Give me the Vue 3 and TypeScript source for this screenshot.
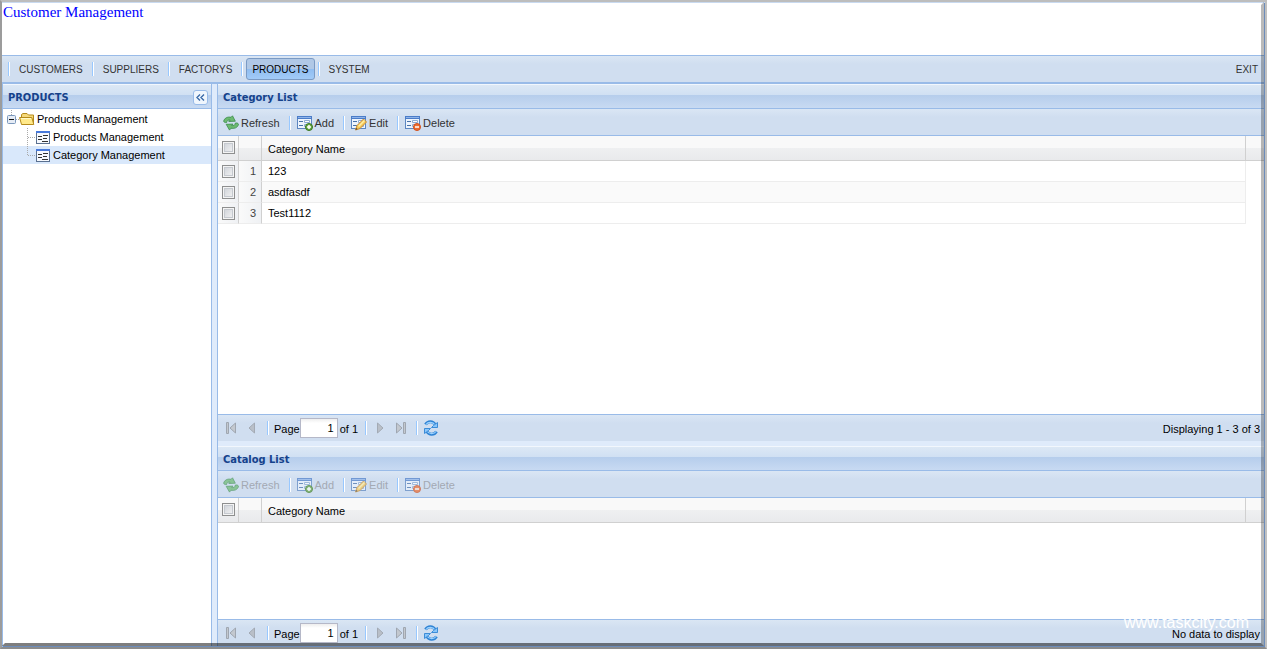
<script setup lang="ts">
import { ref } from 'vue'

interface Action {
  label: string
  icon: 'refresh' | 'add' | 'edit' | 'delete'
}
interface GridPanel {
  id: string
  title: string
  disabled: boolean
  rows: string[]
  status: string
}

const menu: string[] = ['CUSTOMERS', 'SUPPLIERS', 'FACTORYS', 'PRODUCTS', 'SYSTEM']
const activeMenu = ref('PRODUCTS')
const nodes: string[] = ['Products Management', 'Category Management']
const activeNode = ref('Category Management')
const actions: Action[] = [
  { label: 'Refresh', icon: 'refresh' },
  { label: 'Add', icon: 'add' },
  { label: 'Edit', icon: 'edit' },
  { label: 'Delete', icon: 'delete' },
]
const panels: GridPanel[] = [
  { id: 'category', title: 'Category List', disabled: false, rows: ['123', 'asdfasdf', 'Test1112'], status: 'Displaying 1 - 3 of 3' },
  { id: 'catalog', title: 'Catalog List', disabled: true, rows: [], status: 'No data to display' },
]
</script>

<template>
  <div class="window">
    <header class="banner"><a href="#">Customer Management</a></header>

    <nav class="menu">
      <template v-for="item in menu" :key="item">
        <span class="sep"></span>
        <button type="button" :class="{ active: activeMenu === item }" @click="activeMenu = item">{{ item }}</button>
      </template>
      <button type="button" class="exit">EXIT</button>
    </nav>

    <div class="body">
      <aside class="side">
        <h2 class="title">
          PRODUCTS
          <button type="button" class="collapse" aria-label="Collapse">
            <svg width="9" height="7" viewBox="0 0 9 7"><path d="M4 .5 1 3.5l3 3M8 .5 5 3.5l3 3" fill="none" stroke="#3a6aa8" stroke-width="1.4" /></svg>
          </button>
        </h2>
        <ul class="tree">
          <li class="root">
            <svg width="16" height="18" viewBox="0 0 16 18">
              <path d="M8.5 0v5M13 9.5h3" stroke="#aaa" stroke-dasharray="1 1" />
              <rect x="4.5" y="5.5" width="8" height="8" rx="1" fill="#e6ecf5" stroke="#7b98bd" />
              <path d="M6 9.5h5" stroke="#111" />
            </svg>
            <svg width="16" height="16" viewBox="0 0 16 16">
              <path d="M2.5 12V3.500L4 2.500h4l1.500 1.500h5V12z" fill="#f5d97a" stroke="#b58a1b" />
              <path d="M.6 6.500h12.200l2 7H2.500z" fill="#ffe98a" stroke="#b58a1b" />
              <path d="M2 7.500h10" stroke="#fff9c9" />
            </svg>
            <span>Products Management</span>
          </li>
          <li v-for="(node, i) in nodes" :key="node" class="leaf" :class="{ selected: activeNode === node }" @click="activeNode = node">
            <svg width="16" height="18" viewBox="0 0 16 18">
              <path :d="i === 0 ? 'M8.5 0v18M9 9.5h7' : 'M8.5 0v10M9 9.5h7'" stroke="#aaa" stroke-dasharray="1 1" fill="none" />
            </svg>
            <svg width="16" height="16" viewBox="0 0 16 16">
              <rect x="1.5" y="2.5" width="13" height="12" fill="#f6f9fe" stroke="#5a7090" />
              <path d="M1 3h14" stroke="#4779dc" stroke-width="2" />
              <path d="M3 7.500h4M8 6.500h5M3 10.500h4M8 9.500h4M7 12.500h6" stroke="#333" />
            </svg>
            <span>{{ node }}</span>
          </li>
        </ul>
      </aside>

      <main class="main">
        <section v-for="panel in panels" :key="panel.id" class="panel" :class="panel.id">
          <h2 class="title">{{ panel.title }}</h2>

          <div class="actions">
            <template v-for="(action, i) in actions" :key="action.icon">
              <span v-if="i > 0" class="sep"></span>
              <button type="button" :disabled="panel.disabled">
                <svg v-if="action.icon === 'refresh'" width="16" height="16" viewBox="0 0 16 16">
                  <path d="M.6 6.200C1.500 3 4.500 1.500 8 2.300L9.500.8l2.800 5.400-6.500.3 1.400-1.400C5.400 4.700 3.800 5.500 3.600 7.600 2.200 7.800 1 7.300.6 6.200z" fill="#6cba70" stroke="#3a8a4b" stroke-width=".8" />
                  <path d="M15.600 9.300c-.9 3.200-3.900 4.700-7.600 3.900l-1.500 1.900L3.200 9.300l6.800-.2-1.300 1.500c2 .4 3.400-.6 3.700-2.600 1.400-.3 2.700.2 3.200 1.300z" fill="#6cba70" stroke="#3a8a4b" stroke-width=".8" />
                </svg>
                <svg v-else width="16" height="16" viewBox="0 0 16 16">
                  <rect x=".5" y="1.5" width="14" height="12" fill="#edf4fd" stroke="#5c86c1" />
                  <path d="M0 2.500h15" stroke="#4b7cc8" stroke-width="3" />
                  <path d="M1 2.500h13" stroke="#8fb4ea" />
                  <path d="M2 6.500h4M2 10.500h4" stroke="#4771a9" />
                  <path d="M7.500 5.500h5v2h-5zM7.500 9.500h5v2h-5z" fill="#fff" stroke="#8dabd4" />
                  <g v-if="action.icon === 'add'">
                    <circle cx="12" cy="12" r="3.5" fill="#69aa4a" stroke="#38761d" />
                    <path d="M12 10v4M10 12h4" stroke="#fff" stroke-width="1.5" />
                  </g>
                  <g v-else-if="action.icon === 'edit'">
                    <path d="M4.500 15 6 10.500 12.500 4l3 3L9 13.500z" fill="#f8c956" stroke="#c88c35" />
                    <path d="m7.500 11.500 6-6" stroke="#fff0a4" stroke-width="1.500" />
                    <path d="m4.500 15 1-2 1 1z" fill="#333" />
                  </g>
                  <g v-else>
                    <circle cx="12" cy="12" r="3.5" fill="#ee6d32" stroke="#d0511e" />
                    <path d="M10 12h4" stroke="#fff" stroke-width="1.5" />
                  </g>
                </svg>
                {{ action.label }}
              </button>
            </template>
          </div>

          <div class="grid">
            <table>
              <thead>
                <tr>
                  <th class="check"><input type="checkbox" :aria-label="'Select all in ' + panel.title" /></th>
                  <th class="number"></th>
                  <th class="name">Category Name</th>
                  <th class="spare"></th>
                </tr>
              </thead>
              <tbody>
                <tr v-for="(row, i) in panel.rows" :key="row">
                  <td class="check"><input type="checkbox" :aria-label="'Select ' + row" /></td>
                  <td class="number">{{ i + 1 }}</td>
                  <td class="name">{{ row }}</td>
                  <td class="spare"></td>
                </tr>
              </tbody>
            </table>
          </div>

          <footer class="paging">
            <button type="button" disabled aria-label="First page">
              <svg width="16" height="16" viewBox="0 0 16 16"><path d="M3.500 2.500h2v11h-2zM12.500 3v10L7 8z" fill="#c3c8cf" stroke="#9fa6b0" /></svg>
            </button>
            <button type="button" disabled aria-label="Previous page">
              <svg width="16" height="16" viewBox="0 0 16 16"><path d="M10.500 3v10L5 8z" fill="#b9bfc8" stroke="#a3aab4" /></svg>
            </button>
            <span class="sep"></span>
            <label :for="panel.id + '-page'">Page</label>
            <input :id="panel.id + '-page'" type="text" value="1" />
            <span class="total">of 1</span>
            <span class="sep"></span>
            <button type="button" disabled aria-label="Next page">
              <svg width="16" height="16" viewBox="0 0 16 16"><path d="M5.500 3v10L11 8z" fill="#b9bfc8" stroke="#a3aab4" /></svg>
            </button>
            <button type="button" disabled aria-label="Last page">
              <svg width="16" height="16" viewBox="0 0 16 16"><path d="M10.500 2.500h2v11h-2zM3.500 3v10L9 8z" fill="#c3c8cf" stroke="#9fa6b0" /></svg>
            </button>
            <span class="sep"></span>
            <button type="button" aria-label="Reload">
              <svg width="16" height="16" viewBox="0 0 16 16">
                <path d="M2.500 4.500C5 .5 10 1 12 4.500M13.500 11.500c-2.500 4-7.500 3.500-9.500 0" fill="none" stroke="#2f83d4" stroke-width="3" />
                <path d="M3 4.500C5 1.500 10 1.500 12 5M13 11.500c-2 3-7 3-9-.5" fill="none" stroke="#9bd2ff" stroke-width="1.200" />
                <path d="M14.500 2.500v5H8.500l2-2zM1.500 13.500v-5h6l-2 2z" fill="#8ac6fa" stroke="#2f83d4" stroke-width=".9" />
              </svg>
            </button>
            <span class="status">{{ panel.status }}</span>
          </footer>
        </section>
      </main>
    </div>
    <div class="shade"></div>
    <div class="watermark">www.taskcity.com</div>
  </div>
</template>

<style>
body {
  margin: 0;
}
</style>

<style scoped>
* {
  box-sizing: border-box;
}
.window {
  position: relative;
  display: flex;
  flex-direction: column;
  height: 100vh;
  border: 2px solid #9c9c9c;
  border-top-color: #bdbdbd;
  border-right-color: #c0c0c0;
  border-bottom-color: #8c8c8c;
  background: #dfebfb;
  font: 11px/14px "Liberation Sans", Arial, sans-serif;
  color: #000;
}
button {
  display: flex;
  align-items: center;
  margin: 0;
  padding: 0;
  border: 0;
  background: none;
  font: inherit;
  color: #333;
}
svg {
  display: block;
  flex: none;
}
.banner {
  height: 53px;
  padding-left: 1px;
  border-top: 1px solid #c9daf0;
  background: #fff;
  font: 15px/18px "Liberation Serif", "Times New Roman", serif;
}
.banner a {
  color: #00f;
  text-decoration: none;
}
.sep {
  flex: none;
  width: 2px;
  height: 14px;
  border-left: 1px solid #98c8ff;
  border-right: 1px solid #fff;
}
.menu {
  display: flex;
  align-items: center;
  height: 29px;
  padding: 0 6px;
  border-top: 1px solid #99bbe8;
  border-bottom: 2px solid #99bbe8;
  background: linear-gradient(#dae6f4, #d0def0 8px);
}
.menu button {
  height: 22px;
  margin: 0 3px;
  padding: 1px 5px 0;
  border: 1px solid transparent;
  border-radius: 3px;
  font-size: 10px;
}
.menu .active {
  border-color: #7a9ac4;
  background: linear-gradient(#b0c8e6 50%, #8fbcf0 50%, #a2cbf8);
  color: #000;
}
.menu .exit {
  margin: 0 0 0 auto;
  padding: 1px 0 0;
}
.body {
  display: flex;
  flex: 1;
  gap: 5px;
  min-height: 0;
  border-bottom: 1px solid #99bbe8;
}
.side {
  display: flex;
  flex-direction: column;
  width: 210px;
  border: solid #99bbe8;
  border-width: 0 1px;
  background: #fff;
}
.title {
  display: flex;
  align-items: center;
  justify-content: space-between;
  flex: none;
  height: 25px;
  margin: 0;
  padding: 1px 3px 0 5px;
  border-top: 1px solid #f2f7fd;
  border-bottom: 1px solid #99bbe8;
  background: linear-gradient(#dce8f5, #d0e0f3 10px, #b5cdec 10px, #c8daf2);
  font: bold 11px/15px "DejaVu Sans Condensed", Tahoma, sans-serif;
  color: #15428b;
}
.collapse {
  justify-content: center;
  width: 15px;
  height: 15px;
  border: 1px solid #99bbe8;
  border-radius: 3px;
  background: #f0f6fd;
}
.tree {
  margin: 0;
  padding: 0;
  list-style: none;
}
.tree li {
  display: flex;
  align-items: center;
  height: 18px;
}
.tree .root {
  height: 19px;
}
.tree span {
  margin-left: 2px;
}
.leaf {
  padding-left: 16px;
}
.tree .selected {
  background: #d9e8fb;
}
.main {
  display: flex;
  flex: 1;
  flex-direction: column;
  gap: 5px;
  min-width: 0;
  border: solid #99bbe8;
  border-width: 0 1px;
}
.panel {
  display: flex;
  flex-direction: column;
  min-height: 0;
}
.category {
  flex: 357;
}
.catalog {
  flex: 200;
}
.actions,
.paging {
  display: flex;
  align-items: center;
  flex: none;
  height: 27px;
  background: linear-gradient(#dae6f4, #d0def0 8px);
}
.actions {
  padding: 1px 0 0 5px;
  border-bottom: 1px solid #99bbe8;
}
.actions .sep {
  margin: 0 6px 0 9px;
}
.actions button {
  gap: 2px;
}
.actions button:disabled {
  color: #a3a9b3;
}
.actions button:disabled svg {
  opacity: 0.7;
}
.grid {
  flex: 1;
  min-height: 0;
  overflow: hidden;
  background: #fff;
}
table {
  width: 100%;
  border-collapse: separate;
  border-spacing: 0;
  table-layout: fixed;
}
th,
td {
  height: 21px;
  padding: 0;
  border-bottom: 1px solid #ededed;
  font-weight: normal;
  text-align: left;
}
th {
  height: 25px;
  border-right: 1px solid #d0d0d0;
  border-bottom-color: #d0d0d0;
  background: linear-gradient(#f9f9f9 50%, #eff0f1 50%, #e9eaec);
}
.check {
  width: 21px;
  border-right: 1px solid #d0d0d0;
}
.number {
  width: 23px;
  padding-right: 5px;
  border-right: 1px solid #d0d0d0;
  text-align: right;
  color: #444;
}
td.check,
td.number {
  background: linear-gradient(90deg, #fafafa, #eff1f4);
}
.name {
  padding-left: 6px;
}
th.name {
  padding-top: 2px;
}
td.name {
  border-right: 1px solid #ededed;
}
tbody tr:nth-child(even) .name {
  background: #fafafa;
}
.spare {
  width: 18px;
  border-right: 0;
}
td.spare {
  border-bottom: 0;
}
.check input {
  display: block;
  appearance: none;
  width: 13px;
  height: 13px;
  margin: 0 0 0 4px;
  border: 1px solid #8e8f8f;
  background: linear-gradient(135deg, #cbcfd5, #f6f6f6);
  box-shadow: inset 0 0 0 1px #f4f4f4, inset 0 0 0 2px #c5c9cf;
}
th.check {
  padding-bottom: 2px;
}
.paging {
  padding: 0 4px 0 5px;
  border-top: 1px solid #99bbe8;
}
.paging button {
  margin-right: 5px;
}
.paging .sep {
  margin: 0 5px 0 2px;
}
.paging label,
.total,
.status {
  padding-top: 2px;
}
.paging input {
  width: 38px;
  height: 20px;
  margin: 0 2px 0 0;
  padding: 0 3px;
  border: 1px solid #b5b8c8;
  background: linear-gradient(#eee, #fff 4px);
  font: inherit;
  text-align: right;
}
.paging .total {
  margin-right: 5px;
}
.status {
  margin-left: auto;
}
.shade {
  position: absolute;
  inset: 0 1px 1px 0;
  border: 3px solid transparent;
  border-right-color: rgba(0, 0, 0, 0.27);
  border-bottom-color: rgba(0, 0, 0, 0.5);
  box-shadow: 1px 1px 0 #6c8cba;
  pointer-events: none;
}
.watermark {
  position: absolute;
  right: 16px;
  bottom: 15px;
  font-size: 16px;
  line-height: 18px;
  color: #fff;
  pointer-events: none;
}
</style>
